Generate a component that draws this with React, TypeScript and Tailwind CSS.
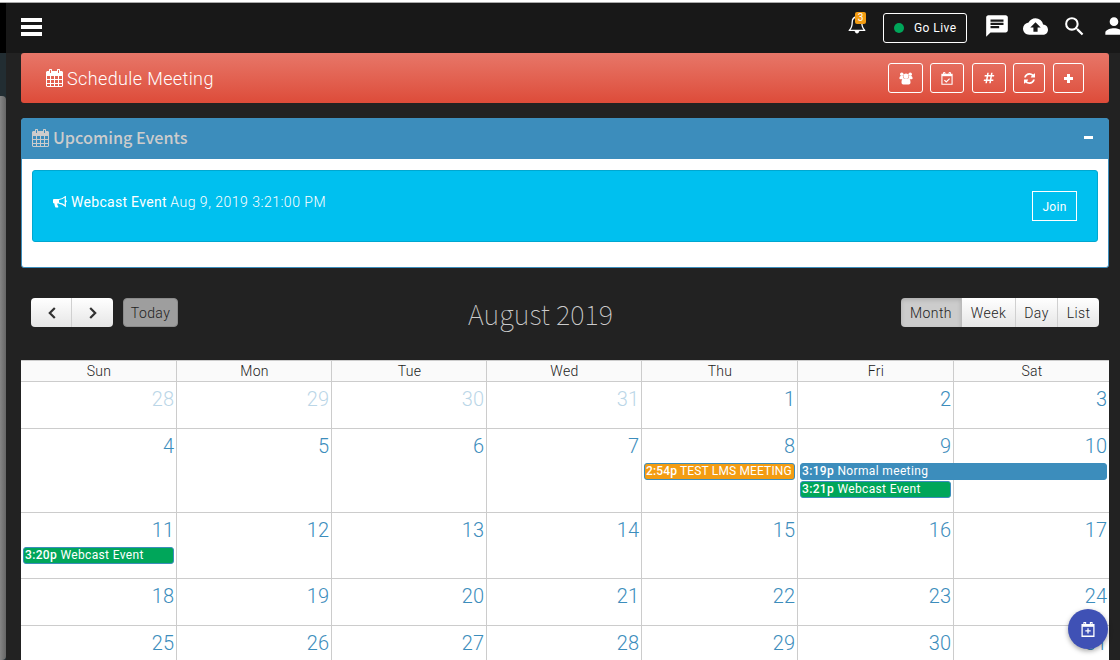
import type { ReactNode } from "react";
import { MdBackup, MdChat, MdPerson, MdSearch } from "react-icons/md";
import { FaHashtag } from "react-icons/fa";

const REFRESH =
  "M1511 1056q0 5-1 7-64 268-268 434.5t-478 166.5q-146 0-282.5-55t-243.5-157l-129 129q-19 19-45 19t-45-19-19-45v-448q0-26 19-45t45-19h448q26 0 45 19t19 45-19 45l-137 137q71 66 161 102t187 36q134 0 250-65t186-179q11-17 53-117 8-23 30-23h192q13 0 22.5 9.5t9.5 22.5zm25-800v448q0 26-19 45t-45 19h-448q-26 0-45-19t-19-45 19-45l138-138q-148-137-349-137-134 0-250 65t-186 179q-11 17-53 117-8 23-30 23h-199q-13 0-22.5-9.5t-9.5-22.5v-7q65-268 270-434.5t480-166.5q146 0 284 55.5t245 156.5l130-129q19-19 45-19t45 19 19 45z";

const CELLS = [7, 11, 15].flatMap((y) => [1, 5, 9, 13].map((x) => `M${x} ${y}v${y === 15 ? 2 : 3}h3v-${y === 15 ? 2 : 3}z`)).join("");

function CalendarIcon() {
  return (
    <svg viewBox="0 0 17 18" className="h-[18px] w-[17px] shrink-0" fill="currentColor">
      <path
        fillRule="evenodd"
        d={`M1 2h2v3h3V2h5v3h3V2h2l1 1v14l-1 1H1l-1-1V3z${CELLS}`}
      />
      <path fillRule="evenodd" d="M3 .5L3.500 0h2l.5.500V5H3zM4 1v3h1V1zM11 .5l.5-.5h2l.5.500V5h-3zM12 1v3h1V1z" />
    </svg>
  );
}

function BellIcon() {
  return (
    <svg viewBox="0 0 18 20" className="h-5 w-[18px]" fill="none" stroke="white" strokeWidth="1.3">
      <path d="M9 1v2M1.2 16.4C3.6 14 4.2 11.5 4.2 8.2 4.2 5 6.3 3 9 3s4.8 2 4.8 5.2c0 3.3.6 5.8 3 8.2z" strokeLinejoin="round" />
      <path d="M7 17c.2 1.600 1 2.200 2 2.200s1.800-.6 2-2.200z" fill="white" strokeWidth="0.5" />
    </svg>
  );
}

function UsersIcon() {
  return (
    <svg viewBox="0 0 14 13" className="h-[13px] w-[14px]" fill="currentColor">
      <circle cx="2.800" cy="2.200" r="1.800" />
      <circle cx="11.200" cy="2.200" r="1.800" />
      <circle cx="7" cy="4.100" r="2.600" />
      <path d="M.4 6.600C.4 5.100 1 4 1.800 4h2.300c0 1.500.3 2.300 1 3.200H1.400C.8 7.200.4 7 .4 6.600zM13.600 6.600c0-1.500-.6-2.600-1.400-2.600H9.900c0 1.500-.3 2.300-1 3.200h3.700c.6 0 1-.2 1-.6z" />
      <path d="M2.500 10.400C2.500 8.200 3 6.400 4.500 6.400h5c1.500 0 2 1.800 2 4 0 1.200-.7 2-1.800 2H4.300c-1.100 0-1.800-.8-1.800-2z" />
    </svg>
  );
}

function CalendarOutline({ children, className }: { children: ReactNode; className: string }) {
  return (
    <svg viewBox="0 0 13 14" className={className} fill="none" stroke="currentColor">
      <path d="M1 2.500h11v10.800H1z" strokeWidth="1.200" />
      <path d="M1 3.500h11" strokeWidth="2" />
      <path d="M2.700 3.500v-3h1.600v3M8.700 3.500v-3h1.600v3" strokeWidth="1" />
      {children}
    </svg>
  );
}

function BullhornIcon() {
  return (
    <svg viewBox="0 0 14 12" className="h-3 w-[14px]" fill="currentColor">
      <path d="M0 4.200c0-.7.4-1.200 1.200-1.200H6v4.500H4.300c-.3 1 .4 1.600.5 2.300.1.500.6.7.6 1.100 0 .7-2.500 1-3.100.3-.3-1.100-1-2.300-.8-3.700H1.200C.4 7.500 0 7 0 6.300z" />
      <path d="M6 3.500C8.600 3.200 10.600 2 12.300.6v9.400C10.600 8.500 8.600 7.500 6 7.100" fill="none" stroke="currentColor" strokeWidth="1.200" />
      <circle cx="12.800" cy="5.200" r="1" />
    </svg>
  );
}

function ToolButton({ width, children }: { width: string; children: ReactNode }) {
  return (
    <button className={`flex h-[30px] items-center justify-center rounded-[3px] border border-white text-white ${width}`}>
      {children}
    </button>
  );
}

type Event = { time: string; title: string; style: string };
type Day = { n: string; muted?: boolean; events?: Event[] };

const SINGLE = "w-[151px]";
const WEEKS: { height: string; days: Day[] }[] = [
  {
    height: "h-[47px]",
    days: [
      { n: "28", muted: true },
      { n: "29", muted: true },
      { n: "30", muted: true },
      { n: "31", muted: true },
      { n: "1" },
      { n: "2" },
      { n: "3" },
    ],
  },
  {
    height: "h-[84px]",
    days: [
      { n: "4" },
      { n: "5" },
      { n: "6" },
      { n: "7" },
      { n: "8", events: [{ time: "2:54p", title: "TEST LMS MEETING", style: `${SINGLE} bg-[#f39c12] tracking-[0.15px]` }] },
      {
        n: "9",
        events: [
          { time: "3:19p", title: "Normal meeting", style: "w-[307px] bg-[#3c8dbc] tracking-[0.35px]" },
          { time: "3:21p", title: "Webcast Event", style: `${SINGLE} bg-[#00a65a] tracking-[0.35px]` },
        ],
      },
      { n: "10" },
    ],
  },
  {
    height: "h-[66px]",
    days: [
      { n: "11", events: [{ time: "3:20p", title: "Webcast Event", style: `${SINGLE} bg-[#00a65a] tracking-[0.35px]` }] },
      { n: "12" },
      { n: "13" },
      { n: "14" },
      { n: "15" },
      { n: "16" },
      { n: "17" },
    ],
  },
  {
    height: "h-[47px]",
    days: [{ n: "18" }, { n: "19" }, { n: "20" }, { n: "21" }, { n: "22" }, { n: "23" }, { n: "24" }],
  },
  {
    height: "h-[47px]",
    days: [{ n: "25" }, { n: "26" }, { n: "27" }, { n: "28" }, { n: "29" }, { n: "30" }, { n: "31" }],
  },
];

const COLUMNS = "grid grid-cols-[156px_155px_155px_155px_156px_156px_155px]";
const BUTTON = "flex items-center justify-center border-[#d0d0d0] bg-linear-to-b from-white to-[#e6e6e6] pt-px";

function EventChip({ time, title, style }: Event) {
  return (
    <div
      className={`relative z-10 mb-px h-[17px] overflow-hidden rounded-[3px] border border-[#3c8dbc] px-px text-[12px] leading-[14px] whitespace-nowrap text-white ${style}`}
    >
      <span className="font-medium">{time}</span> <span>{title}</span>
    </div>
  );
}

function Calendar() {
  return (
    <div className="w-[1088px] bg-white text-[#222]">
      <div className={`${COLUMNS} h-[22px] border-y border-[#ccc] bg-[#fafafa]`}>
        {["Sun", "Mon", "Tue", "Wed", "Thu", "Fri", "Sat"].map((d) => (
          <div key={d} className="border-r border-[#ccc] pl-px text-center text-[14px] leading-[21px] font-light tracking-[0.3px] last:border-r-0">
            {d}
          </div>
        ))}
      </div>
      {WEEKS.map((week, i) => (
        <div key={i} className={`${COLUMNS} ${week.height} border-b border-[#ccc]`}>
          {week.days.map((day) => (
            <div key={day.n} className="border-r border-[#ccc] pl-[2px] last:border-r-0">
              <div
                className={`h-[34px] pr-[2px] text-right text-[20px] leading-[34px] font-light text-[#3c8dbc] ${day.muted ? "opacity-35" : ""}`}
              >
                {day.n}
              </div>
              {day.events?.map((e) => <EventChip key={e.time} {...e} />)}
            </div>
          ))}
        </div>
      ))}
    </div>
  );
}

export default function App() {
  return (
    <div className="relative flex h-[660px] w-[1120px] flex-col overflow-hidden bg-[#222] font-['Roboto','Liberation_Sans',sans-serif]">
      <div className="h-[3px] shrink-0 border-b border-[#aaa] bg-white" />
      <div className="flex min-h-0 flex-1">
        <aside className="flex w-[6px] shrink-0 flex-col bg-[#222d32]">
          <div className="h-[50px] bg-black" />
          <div className="mt-[43px] flex-1 rounded-r-[4px] bg-linear-to-r from-[#858585] to-[#666]" />
        </aside>
        <div className="flex w-[1114px] flex-col">
          <header className="flex h-[50px] shrink-0 items-start bg-[#181818] pl-[15px]">
            <div className="mt-[15px] flex w-[21px] shrink-0 flex-col gap-[3px]">
              <div className="h-1 bg-white" />
              <div className="h-1 bg-white" />
              <div className="h-1 bg-white" />
            </div>
            <div className="relative mt-[11px] ml-[806px] h-5 w-[18px] shrink-0">
              <BellIcon />
              <span className="absolute top-[-2px] left-[7px] flex h-[12px] w-[11px] items-center justify-center rounded-[2px] bg-[#f39c12] text-[10px] leading-none text-white">
                3
              </span>
            </div>
            <button className="mt-[10px] ml-[17px] flex h-[30px] w-[84px] shrink-0 items-center rounded-[3px] border border-white pl-[10px] text-white">
              <span className="h-[10px] w-[10px] rounded-full bg-[#00a65a]" />
              <span className="ml-[10px] text-[12px] tracking-[0.45px] whitespace-nowrap">Go Live</span>
            </button>
            <div className="mt-[10px] ml-[17px] flex shrink-0 items-center text-white">
              <MdChat className="h-[26px] w-[26px] shrink-0" />
              <MdBackup className="ml-[13px] h-[25px] w-[25px] shrink-0" />
              <MdSearch className="ml-[14px] h-[25px] w-[25px] shrink-0" />
              <MdPerson className="ml-[14px] h-[26px] w-[26px] shrink-0" />
            </div>
          </header>

          <main className="flex flex-col pl-[15px]">
            <section className="flex h-[50px] w-[1088px] shrink-0 items-center rounded-[3px] bg-linear-to-b from-[#e77668] to-[#dd4b39] pl-[25px] text-white">
              <CalendarIcon />
              <h1 className="ml-1 flex-1 text-[18px] font-light tracking-[0.38px]">Schedule Meeting</h1>
              <div className="flex pr-[25px]">
                <ToolButton width="w-[35px] mr-[7px]">
                  <UsersIcon />
                </ToolButton>
                <ToolButton width="w-[34px] mr-[8px]">
                  <CalendarOutline className="h-[13px] w-[12px]">
                    <path d="M3.700 8.800l2 2 3.600-3.600" strokeWidth="1.300" />
                  </CalendarOutline>
                </ToolButton>
                <ToolButton width="w-[34px] mr-[7px]">
                  <FaHashtag className="h-3 w-3" />
                </ToolButton>
                <ToolButton width="w-[32px] mr-[8px]">
                  <svg viewBox="0 128 1536 1536" className="h-[11px] w-[11px]" fill="currentColor">
                    <path d={REFRESH} />
                  </svg>
                </ToolButton>
                <ToolButton width="w-[31px]">
                  <svg viewBox="0 0 9 9" className="h-[9px] w-[9px]" fill="currentColor">
                    <path d="M3 0h3v3h3v3H6v3H3V6H0V3h3z" />
                  </svg>
                </ToolButton>
              </div>
            </section>

            <section className="mt-[15px] h-[150px] w-[1088px] shrink-0 rounded-[3px] border border-[#3c8dbc] bg-white">
              <div className="flex h-10 items-start bg-[#3c8dbc] pl-[10px] text-[#ccc]">
                <div className="mt-[10px]">
                  <CalendarIcon />
                </div>
                <h2 className="mt-[10px] ml-1 flex-1 font-['Noto_Sans_CJK_SC',sans-serif] text-[16.2px] leading-[17px] font-medium">
                  Upcoming Events
                </h2>
                <div className="mt-[17px] mr-[15px] h-[3px] w-[9px] bg-white" />
              </div>
              <div className="mx-[10px] mt-[11px] flex h-[72px] rounded-[3px] border border-[#00a7d0] bg-[#00c0ef] pl-[20px] text-white">
                <div className="mt-[24px] flex h-[14px] items-center">
                  <BullhornIcon />
                  <p className="ml-1 text-[14px] leading-[14px] whitespace-nowrap">
                    <span className="tracking-[0.3px]">Webcast Event</span>{" "}
                    <span className="font-light tracking-[0.5px]">Aug 9, 2019 3:21:00 PM</span>
                  </p>
                </div>
                <button className="mt-[20px] mr-[20px] ml-auto h-[30px] w-[45px] border border-white pt-px text-[12px] tracking-[0.3px]">
                  Join
                </button>
              </div>
            </section>

            <div className="mt-[30px] flex h-[29px] w-[1088px] shrink-0 items-center pr-[10px] pl-[10px] text-[14px] text-[#222]">
              <div className="flex w-[147px]">
                <div className="flex h-[29px] w-[82px] overflow-hidden rounded-[4px]">
                  <button className={`${BUTTON} w-[41px] border-r pl-px`}>
                    <svg viewBox="0 0 8 12" className="h-3 w-2" fill="none" stroke="#333" strokeWidth="2.200">
                      <path d="M6.800 1L1.800 6l5 5" />
                    </svg>
                  </button>
                  <button className={`${BUTTON} w-[41px]`}>
                    <svg viewBox="0 0 8 12" className="h-3 w-2" fill="none" stroke="#333" strokeWidth="2.200">
                      <path d="M1.200 1l5 5-5 5" />
                    </svg>
                  </button>
                </div>
                <button className="ml-[10px] h-[29px] w-[55px] rounded-[4px] border border-[#8b8b8b] bg-[#9e9e9e] pt-px font-light tracking-[0.4px]">
                  Today
                </button>
              </div>
              <h2 className="mt-[2px] flex-1 pl-[2px] text-center font-['Noto_Sans_CJK_SC',sans-serif] text-[27.3px] leading-none font-thin whitespace-nowrap text-[#ccc]">
                August 2019
              </h2>
              <div className="flex h-[29px] w-[198px] overflow-hidden rounded-[4px] font-light tracking-[0.4px]">
                <button className="w-[61px] border-r border-[#bbb] bg-[#ccc] pt-px shadow-[inset_0_2px_4px_rgba(0,0,0,0.15)]">Month</button>
                <button className={`${BUTTON} w-[54px] border-r`}>Week</button>
                <button className={`${BUTTON} w-[42px] border-r`}>Day</button>
                <button className={`${BUTTON} w-[41px]`}>List</button>
              </div>
            </div>

            <div className="mt-[33px]">
              <Calendar />
            </div>
          </main>
        </div>
      </div>
      <button className="absolute top-[609px] left-[1068px] z-20 flex h-10 w-10 items-center justify-center rounded-full bg-[#3f51b5] text-white shadow-[0_2px_5px_rgba(0,0,0,0.35)]">
        <CalendarOutline className="h-[15px] w-[14px]">
          <path d="M6.500 5.800v5M4 8.300h5" strokeWidth="1.200" />
        </CalendarOutline>
      </button>
    </div>
  );
}
